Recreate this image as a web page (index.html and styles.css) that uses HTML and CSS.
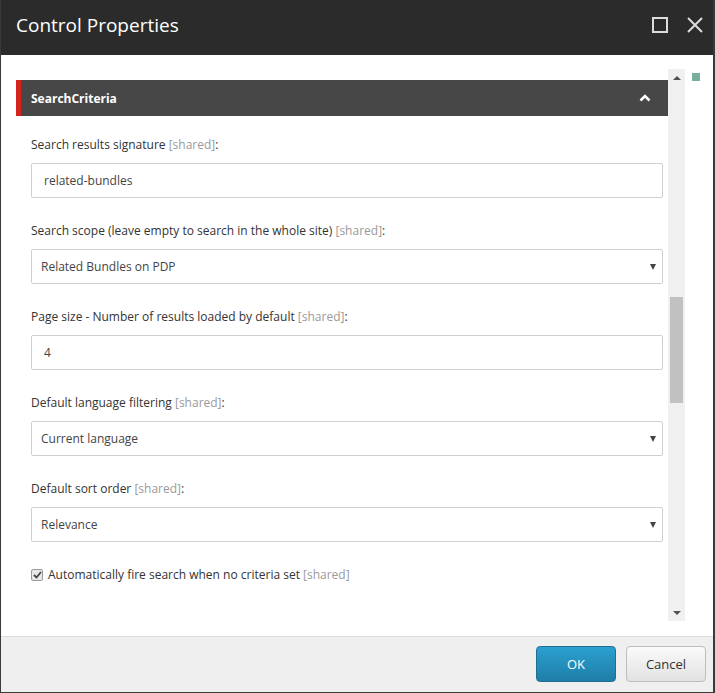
FILE: index.html
```html
<!DOCTYPE html>
<html>
<head>
    <link rel="stylesheet" href="styles.css">
</head>
<body>
    <div class="dialog">
        <div class="dialog-header">
            <h1>Control Properties</h1>
            <div class="header-icons">
                <svg width="16" height="16" viewBox="0 0 16 16"><rect x="1" y="1" width="14" height="14" fill="none" stroke="#dcdcdc" stroke-width="2"/></svg>
                <svg width="16" height="16" viewBox="0 0 16 16"><path d="M1 1 L15 15 M15 1 L1 15" stroke="#dcdcdc" stroke-width="2" fill="none"/></svg>
            </div>
        </div>
        <div class="dialog-body">
            <div class="scroll-panel">
                <div class="scroll-content">
                    <div class="section-bar">
                        <span>SearchCriteria</span>
                        <svg width="12" height="8" viewBox="0 0 12 8"><path d="M1.5 6.5 L6 2 L10.5 6.5" stroke="#fff" stroke-width="2.6" fill="none"/></svg>
                    </div>
                    <div class="fields">
                        <div class="field">
                            <label>Search results signature <span class="shared">[shared]</span>:</label>
                            <div class="input">related-bundles</div>
                        </div>
                        <div class="field">
                            <label>Search scope (leave empty to search in the whole site) <span class="shared">[shared]</span>:</label>
                            <div class="input select">Related Bundles on PDP<span class="caret"></span></div>
                        </div>
                        <div class="field">
                            <label>Page size - Number of results loaded by default <span class="shared">[shared]</span>:</label>
                            <div class="input">4</div>
                        </div>
                        <div class="field">
                            <label>Default language filtering <span class="shared">[shared]</span>:</label>
                            <div class="input select">Current language<span class="caret"></span></div>
                        </div>
                        <div class="field">
                            <label>Default sort order <span class="shared">[shared]</span>:</label>
                            <div class="input select">Relevance<span class="caret"></span></div>
                        </div>
                        <div class="check-row">
                            <span class="checkbox">
                                <svg width="9" height="8" viewBox="0 0 9 8"><path d="M1 4 L3.5 6.5 L8 1" stroke="#444" stroke-width="1.8" fill="none"/></svg>
                            </span>
                            <span>Automatically fire search when no criteria set <span class="shared">[shared]</span></span>
                        </div>
                    </div>
                </div>
                <div class="scrollbar">
                    <div class="sb-btn"><span class="tri-up"></span></div>
                    <div class="sb-track"><div class="sb-thumb"></div></div>
                    <div class="sb-btn"><span class="tri-down"></span></div>
                </div>
            </div>
            <div class="marker"></div>
        </div>
        <div class="dialog-footer">
            <button class="btn btn-primary">OK</button>
            <button class="btn">Cancel</button>
        </div>
    </div>
</body>
</html>
```

FILE: styles.css
```css
body {
    margin: 0;
    font-family: "Open Sans", sans-serif;
    background-color: #fff;
}
.dialog {
    width: 715px;
    height: 693px;
    box-sizing: border-box;
    display: flex;
    flex-direction: column;
    border-left: 1px solid #3a3a3a;
    border-right: 2px solid #3a3a3a;
    border-bottom: 1px solid #3a3a3a;
    background-color: #fff;
}
.dialog-header {
    height: 55px;
    flex-shrink: 0;
    background-color: #2b2b2b;
    display: flex;
    align-items: center;
    justify-content: space-between;
    padding: 0 10px 0 15px;
    box-sizing: border-box;
}
.dialog-header h1 {
    margin: 0;
    font-size: 19px;
    font-weight: 400;
    color: #fff;
    margin-top: -5px;
}
.header-icons {
    display: flex;
    gap: 19px;
    margin-top: -5px;
}
.dialog-body {
    flex: 1;
    display: flex;
    align-items: flex-start;
    padding: 14px 0 0 15px;
    gap: 7px;
}
.scroll-panel {
    width: 669px;
    height: 552px;
    display: flex;
}
.scroll-content {
    flex: 1;
    padding-top: 11px;
}
.section-bar {
    height: 36px;
    background-color: #474747;
    border-left: 5px solid #d4241c;
    display: flex;
    align-items: center;
    justify-content: space-between;
    padding: 0 17px 0 10px;
    color: #fff;
    font-size: 12px;
    font-weight: 700;
}
.fields {
    padding: 20px 5px 0 15px;
}
.field {
    margin-bottom: 24px;
}
.field label {
    display: block;
    font-size: 12px;
    line-height: 18px;
    color: #333;
    margin-bottom: 9px;
}
.shared {
    color: #9a9a9a;
}
.input {
    height: 35px;
    box-sizing: border-box;
    border: 1px solid #cfcfcf;
    border-radius: 2px;
    font-size: 12px;
    color: #444;
    display: flex;
    align-items: center;
    padding: 0 12px;
}
.select {
    justify-content: space-between;
    padding: 0 6px 0 9px;
}
.caret {
    width: 0;
    height: 0;
    border-left: 3px solid transparent;
    border-right: 3px solid transparent;
    border-top: 6px solid #444;
}
.check-row {
    display: flex;
    align-items: center;
    gap: 5px;
    font-size: 12px;
    color: #333;
    margin-top: 2px;
}
.checkbox {
    width: 12px;
    height: 12px;
    box-sizing: border-box;
    border: 1px solid #9a9a9a;
    border-radius: 2px;
    background-color: #e8e8e8;
    display: flex;
    align-items: center;
    justify-content: center;
}
.scrollbar {
    width: 17px;
    background-color: #f0f0f0;
    display: flex;
    flex-direction: column;
}
.sb-btn {
    height: 17px;
    display: flex;
    align-items: center;
    justify-content: center;
}
.tri-up, .tri-down {
    width: 0;
    height: 0;
    border-left: 4px solid transparent;
    border-right: 4px solid transparent;
}
.tri-up {
    border-bottom: 4px solid #505050;
}
.tri-down {
    border-top: 4px solid #505050;
}
.sb-track {
    flex: 1;
    padding: 211px 2px 0 2px;
}
.sb-thumb {
    height: 106px;
    background-color: #c1c1c1;
}
.marker {
    width: 8px;
    height: 8px;
    margin-top: 4px;
    background-color: #78ae9a;
}
.dialog-footer {
    height: 56px;
    flex-shrink: 0;
    box-sizing: border-box;
    background-color: #efefef;
    border-top: 1px solid #dcdcdc;
    display: flex;
    align-items: center;
    justify-content: flex-end;
    gap: 10px;
    padding: 0 7px 2px 0;
}
.btn {
    width: 80px;
    height: 36px;
    border-radius: 4px;
    border: 1px solid #bdbdbd;
    background: linear-gradient(#fafafa, #e2e2e2);
    font-family: "Open Sans", sans-serif;
    font-size: 13px;
    color: #333;
    cursor: pointer;
}
.btn-primary {
    border-color: #1f6f93;
    background: linear-gradient(#2ba0cf, #1f7ea8);
    color: #fff;
}
```
